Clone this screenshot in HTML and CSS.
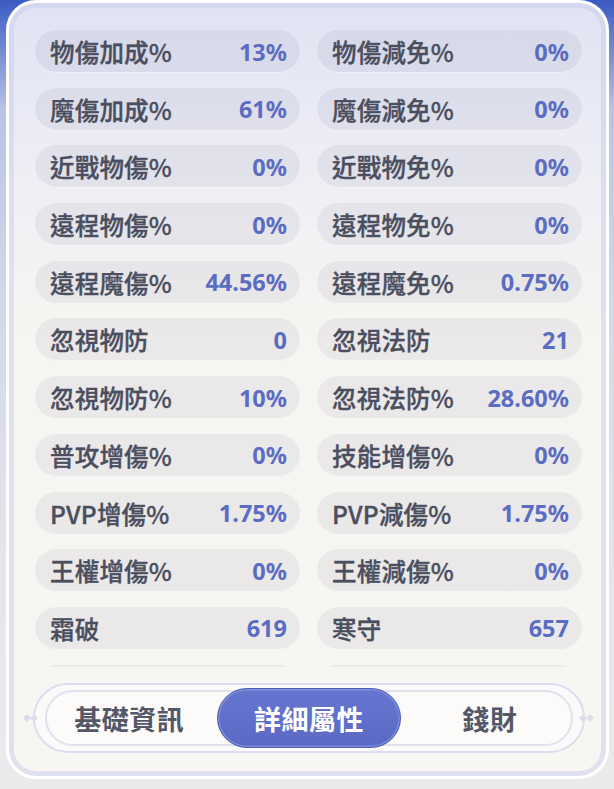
FILE: index.html
```html
<!DOCTYPE html>
<html lang="zh-Hant">
<head>
<meta charset="utf-8">
<title>詳細屬性</title>
<link rel="stylesheet" href="styles.css">
</head>
<body>
<div class="panel">
  <div class="list">
    <div class="grid">
      <div class="pill"><span class="label">物傷加成%</span><span class="value">13%</span></div>
      <div class="pill"><span class="label">物傷減免%</span><span class="value">0%</span></div>
      <div class="pill"><span class="label">魔傷加成%</span><span class="value">61%</span></div>
      <div class="pill"><span class="label">魔傷減免%</span><span class="value">0%</span></div>
      <div class="pill"><span class="label">近戰物傷%</span><span class="value">0%</span></div>
      <div class="pill"><span class="label">近戰物免%</span><span class="value">0%</span></div>
      <div class="pill"><span class="label">遠程物傷%</span><span class="value">0%</span></div>
      <div class="pill"><span class="label">遠程物免%</span><span class="value">0%</span></div>
      <div class="pill"><span class="label">遠程魔傷%</span><span class="value">44.56%</span></div>
      <div class="pill"><span class="label">遠程魔免%</span><span class="value">0.75%</span></div>
      <div class="pill"><span class="label">忽視物防</span><span class="value">0</span></div>
      <div class="pill"><span class="label">忽視法防</span><span class="value">21</span></div>
      <div class="pill"><span class="label">忽視物防%</span><span class="value">10%</span></div>
      <div class="pill"><span class="label">忽視法防%</span><span class="value">28.60%</span></div>
      <div class="pill"><span class="label">普攻增傷%</span><span class="value">0%</span></div>
      <div class="pill"><span class="label">技能增傷%</span><span class="value">0%</span></div>
      <div class="pill"><span class="label">PVP增傷%</span><span class="value">1.75%</span></div>
      <div class="pill"><span class="label">PVP減傷%</span><span class="value">1.75%</span></div>
      <div class="pill"><span class="label">王權增傷%</span><span class="value">0%</span></div>
      <div class="pill"><span class="label">王權減傷%</span><span class="value">0%</span></div>
      <div class="pill"><span class="label">霜破</span><span class="value">619</span></div>
      <div class="pill"><span class="label">寒守</span><span class="value">657</span></div>
      <div class="pill pill-hidden"></div>
      <div class="pill pill-hidden"></div>
    </div>
  </div>
  <div class="tabs">
    <svg class="orn orn-left" width="18" height="12" viewBox="0 0 18 12"><path d="M1 6 L5 2 L9 6 L5 10 Z M8 6 L12 2 L16 6 L12 10 Z" fill="#dcdcec"/></svg>
    <svg class="orn orn-right" width="18" height="12" viewBox="0 0 18 12"><path d="M1 6 L5 2 L9 6 L5 10 Z M8 6 L12 2 L16 6 L12 10 Z" fill="#dcdcec"/></svg>
    <div class="tabs-inner">
      <div class="tab tab-first">基礎資訊</div>
      <div class="tab tab-active">詳細屬性</div>
      <div class="tab tab-last">錢財</div>
    </div>
  </div>
</div>
</body>
</html>
```
FILE: styles.css
```css
html, body {
  margin: 0;
  padding: 0;
}
body {
  width: 614px;
  height: 789px;
  overflow: hidden;
  background: linear-gradient(180deg, #3b5bc4 0px, #5d78cc 30px, #b9c3e4 110px, #d3d8ea 300px, #e4e5eb 560px, #ebebec 789px);
  font-family: "Noto Sans CJK TC", "Noto Sans", sans-serif;
}
.panel {
  position: relative;
  box-sizing: border-box;
  margin-left: 6px;
  width: 603px;
  height: 779px;
  border: 3px solid #ffffff;
  border-radius: 30px;
  background: linear-gradient(180deg, #e1e3f3 0px, #eaebf5 120px, #f2f1f4 230px, #f7f5f1 330px, #f8f6f3 779px);
  box-shadow: inset 0 0 0 5px rgba(196, 200, 236, 0.45);
  padding: 27px 23px 0 26px;
}
.list {
  height: 637px;
  overflow: hidden;
}
.grid {
  display: grid;
  grid-template-columns: 265px 265px;
  column-gap: 17px;
  row-gap: 14.7px;
  grid-auto-rows: 43px;
}
.pill {
  display: flex;
  align-items: center;
  justify-content: space-between;
  padding: 0 13px 0 15px;
  border-radius: 22px;
  background: rgba(70, 72, 120, 0.07);
  box-shadow: inset 0 -1px 0 rgba(255, 255, 255, 0.6);
}
.label {
  font-size: 24.5px;
  font-weight: 500;
  color: #4a4e5e;
  -webkit-text-stroke: 0.35px #4a4e5e;
  letter-spacing: 0.2px;
}
.value {
  font-family: "Noto Sans", sans-serif;
  font-size: 23.5px;
  font-weight: 700;
  color: #5a6dc2;
}
.tabs {
  position: relative;
  box-sizing: border-box;
  margin: 16px 0 0 -2px;
  width: 552px;
  height: 70px;
  border: 2px solid #dddded;
  border-radius: 35px;
  background: #fbfafa;
  padding: 5px 10px;
}
.orn {
  position: absolute;
  top: 27px;
}
.orn-left { left: -13px; }
.orn-right { right: -13px; }
.tabs-inner {
  box-sizing: border-box;
  height: 56px;
  border: 2px solid #e2e1ee;
  border-radius: 28px;
  background: #fcfbf9;
  display: grid;
  grid-template-columns: 1fr 1fr 1fr;
  align-items: stretch;
}
.tab {
  display: flex;
  align-items: center;
  justify-content: center;
  font-size: 27px;
  font-weight: 700;
  color: #545767;
  letter-spacing: 0.5px;
}
.tab-first { padding-right: 10px; }
.tab-last { padding-left: 12px; }
.tab-active {
  margin: -4px -5px;
  border-radius: 30px;
  background: linear-gradient(180deg, #6675cf 0%, #5a69c4 100%);
  border: 1.5px solid #4d5bb6;
  box-shadow: inset 0 0 0 1.5px rgba(150, 165, 230, 0.55);
  color: #ffffff;
}
```
